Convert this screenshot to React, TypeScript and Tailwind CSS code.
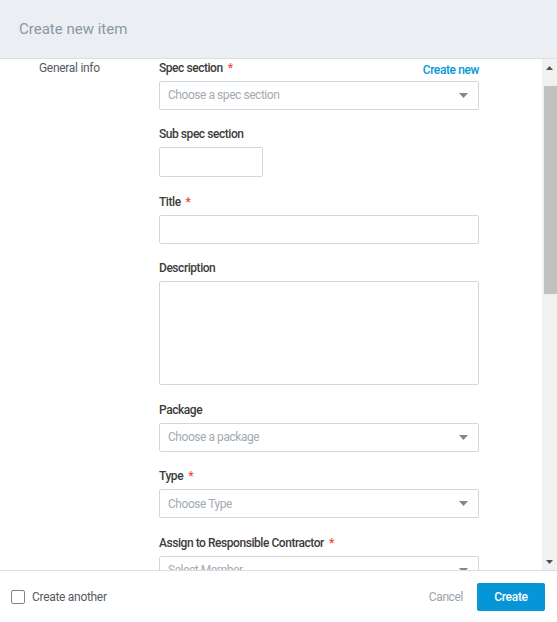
import React from "react";

const font = { fontFamily: "Roboto, 'Liberation Sans', sans-serif" };

function Label({ text, required }: { text: string; required?: boolean }) {
  return (
    <div className="h-4 text-[12px] font-medium leading-4 tracking-[-0.45px] text-[#3c3c3c]">
      {text}
      {required && <span className="ml-[5px] text-[#ec4a41]">*</span>}
    </div>
  );
}

function Select({ placeholder }: { placeholder: string }) {
  return (
    <div className="flex h-[29px] w-full shrink-0 items-center justify-between rounded-[2px] border border-[#d3d8dd] bg-white pl-2 pr-[10px]">
      <span className="text-[12px] tracking-[-0.45px] text-[#a3abb3]">{placeholder}</span>
      <svg width="9" height="5" viewBox="0 0 9 5">
        <path d="M0 0h9L4.5 5z" fill="#808890" />
      </svg>
    </div>
  );
}

function Field({ children }: { children: React.ReactNode }) {
  return <div className="flex flex-col gap-[5px]">{children}</div>;
}

export default function App() {
  return (
    <div className="flex h-[622px] w-[557px] flex-col bg-white" style={font}>
      {/* Header */}
      <div className="flex h-[59px] shrink-0 items-center border-b border-[#d9dee3] bg-[#ebeff3] px-[19px]">
        <span className="text-[15px] text-[#8c97a2]">Create new item</span>
      </div>

      {/* Body */}
      <div className="flex min-h-0 flex-1">
        <div className="flex-1 overflow-hidden">
          <div className="flex pt-[0.5px]">
            <div className="w-[159px] shrink-0 pl-[39px] pt-[0.5px] text-[12px] leading-4 tracking-[-0.3px] text-[#555c63]">
              General info
            </div>
            <div className="flex w-[320px] flex-col gap-[16.5px]">
              <Field>
                <div className="flex h-4 items-start justify-between">
                  <Label text="Spec section" required />
                  <span className="mt-[2px] text-[12px] font-medium leading-4 tracking-[-0.4px] text-[#0696d7]">Create new</span>
                </div>
                <Select placeholder="Choose a spec section" />
              </Field>
              <Field>
                <Label text="Sub spec section" />
                <div className="h-[30px] w-[104px] rounded-[2px] border border-[#d3d8dd]" />
              </Field>
              <Field>
                <Label text="Title" required />
                <div className="h-[29px] w-full rounded-[2px] border border-[#d3d8dd]" />
              </Field>
              <Field>
                <Label text="Description" />
                <div className="h-[104px] w-full rounded-[2px] border border-[#d3d8dd]" />
              </Field>
              <Field>
                <Label text="Package" />
                <Select placeholder="Choose a package" />
              </Field>
              <Field>
                <Label text="Type" required />
                <Select placeholder="Choose Type" />
              </Field>
              <Field>
                <Label text="Assign to Responsible Contractor" required />
                <Select placeholder="Select Member" />
              </Field>
            </div>
          </div>
        </div>

        {/* Scrollbar */}
        <div className="flex w-[15px] shrink-0 flex-col bg-[#f1f1f1]">
          <div className="flex h-[17px] items-center justify-center">
            <svg width="7" height="4" viewBox="0 0 7 4">
              <path d="M0 4h7L3.5 0z" fill="#505050" />
            </svg>
          </div>
          <div className="h-[10px]" />
          <div className="ml-[2px] mr-0 h-[208px] bg-[#c1c1c1]" />
          <div className="flex-1" />
          <div className="flex h-[17px] items-center justify-center">
            <svg width="7" height="4" viewBox="0 0 7 4">
              <path d="M0 0h7L3.5 4z" fill="#505050" />
            </svg>
          </div>
        </div>
      </div>

      {/* Footer */}
      <div className="flex h-[52px] shrink-0 items-center border-t border-[#d9dee3] bg-white pl-[11px] pr-[12px]">
        <div className="h-[14px] w-[14px] rounded-[2px] border border-[#7b858f]" />
        <span className="ml-[7px] text-[12px] tracking-[-0.3px] text-[#555c63]">Create another</span>
        <div className="flex-1" />
        <span className="mr-[14px] text-[12px] tracking-[-0.4px] text-[#9ba3ab]">Cancel</span>
        <button className="h-[28px] w-[68px] rounded-[2px] bg-[#0696d7] text-[12px] font-medium tracking-[-0.3px] text-white">
          Create
        </button>
      </div>
    </div>
  );
}
